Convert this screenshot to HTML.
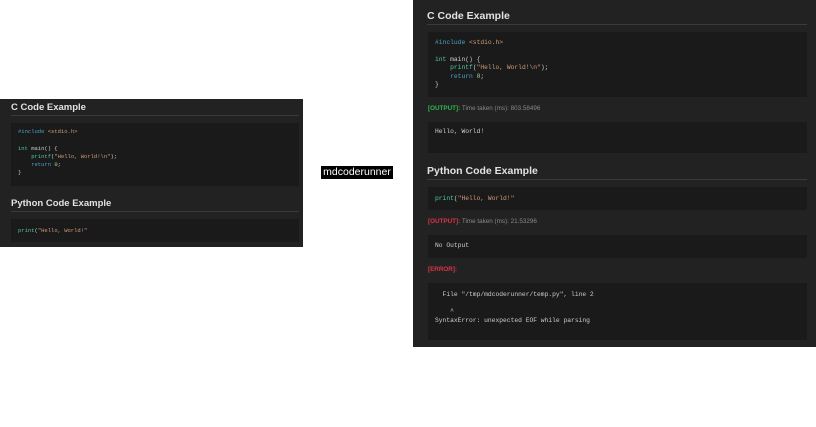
<!DOCTYPE html>
<html><head><style>
body{margin:0;width:816px;height:427px;background:#fff;position:relative;overflow:hidden;font-family:"Liberation Sans",sans-serif}
.p{position:absolute;background:#222}
.a{position:absolute}
.t{color:#e2e2e2;font-weight:bold;white-space:nowrap}
.ln{position:absolute;height:1px;background:#3a3a3a}
.cb{position:absolute;background:#1a1a1a}
pre{margin:0;font-family:"Liberation Mono",monospace;color:#ccc;position:absolute;white-space:pre}
.k{color:#4aa3c8}.g{color:#4ec9a0}.s{color:#d09a7a}.n{color:#b5cea8}.m{color:#888}
.ok{color:#2eb84a;font-weight:bold}.er{color:#d8344a;font-weight:bold}.tm{color:#888}
</style></head><body>
<div class="p" style="left:0;top:99px;width:303px;height:148px"></div>
<div class="a t" style="left:11px;top:102px;font-size:9.5px">C Code Example</div>
<div class="ln" style="left:11px;top:115px;width:288px"></div>
<div class="cb" style="left:11px;top:123px;width:288px;height:63px"></div>
<pre style="left:18px;top:128px;font-size:5.5px;line-height:8.3px"><span class="k">#include</span> <span class="s">&lt;stdio.h&gt;</span>

<span class="g">int</span> main() {
    <span class="g">printf</span>(<span class="s">"Hello, World!\n"</span>);
    <span class="k">return</span> <span class="n">0</span>;
}</pre>
<div class="a t" style="left:11px;top:198px;font-size:9.5px">Python Code Example</div>
<div class="ln" style="left:11px;top:211px;width:288px"></div>
<div class="cb" style="left:11px;top:219px;width:288px;height:23px"></div>
<pre style="left:18px;top:227px;font-size:5.5px"><span class="g">print</span>(<span class="s">"Hello, World!"</span></pre>

<div class="a" style="left:321px;top:166px;width:72px;height:13px;background:#000;color:#fff;font-size:10.5px;line-height:13px;text-align:center">mdcoderunner</div>

<div class="p" style="left:413px;top:0;width:403px;height:347px"></div>
<div class="a t" style="left:427px;top:10px;font-size:10.5px">C Code Example</div>
<div class="ln" style="left:427px;top:24px;width:380px"></div>
<div class="cb" style="left:428px;top:32px;width:379px;height:65px"></div>
<pre style="left:435px;top:39px;font-size:6.3px;line-height:8.4px"><span class="k">#include</span> <span class="s">&lt;stdio.h&gt;</span>

<span class="g">int</span> main() {
    <span class="g">printf</span>(<span class="s">"Hello, World!\n"</span>);
    <span class="k">return</span> <span class="n">0</span>;
}</pre>
<div class="a" style="left:428px;top:105px;font-size:6.3px"><span class="ok">[OUTPUT]:</span> <span class="tm">Time taken (ms): 803.58496</span></div>
<div class="cb" style="left:428px;top:122px;width:379px;height:31px"></div>
<pre style="left:435px;top:128px;font-size:6.3px">Hello, World!</pre>
<div class="a t" style="left:427px;top:165px;font-size:10.5px">Python Code Example</div>
<div class="ln" style="left:427px;top:179px;width:380px"></div>
<div class="cb" style="left:428px;top:187px;width:379px;height:23px"></div>
<pre style="left:435px;top:195px;font-size:6.3px"><span class="g">print</span>(<span class="s">"Hello, World!"</span></pre>
<div class="a" style="left:428px;top:218px;font-size:6.3px"><span class="er">[OUTPUT]:</span> <span class="tm">Time taken (ms): 21.53296</span></div>
<div class="cb" style="left:428px;top:235px;width:379px;height:23px"></div>
<pre style="left:435px;top:242px;font-size:6.3px">No Output</pre>
<div class="a" style="left:428px;top:266px;font-size:6.3px"><span class="er">[ERROR]:</span></div>
<div class="cb" style="left:428px;top:283px;width:379px;height:57px"></div>
<pre style="left:435px;top:291px;font-size:6.3px;line-height:8.5px">  File "/tmp/mdcoderunner/temp.py", line 2

    ^
SyntaxError: unexpected EOF while parsing</pre>
</body></html>
